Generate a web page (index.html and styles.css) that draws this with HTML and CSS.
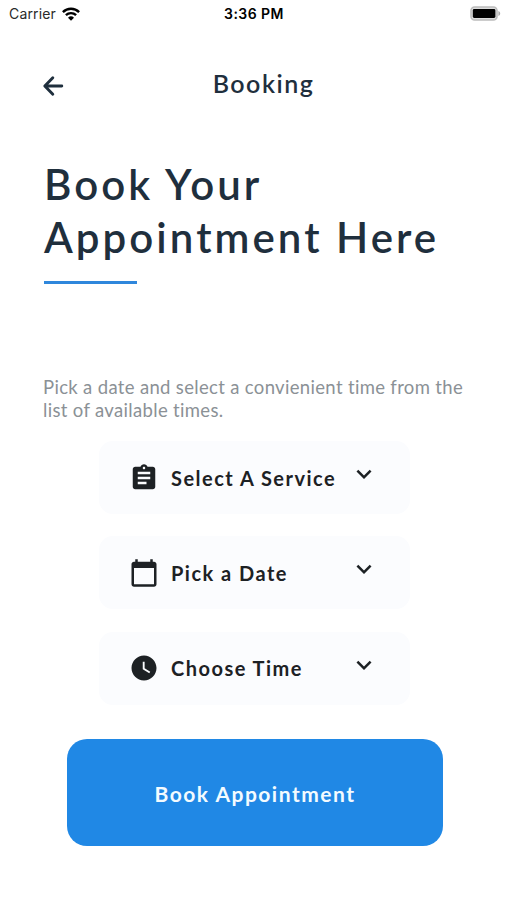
FILE: index.html
```html
<!DOCTYPE html>
<html lang="en">
<head>
<meta charset="utf-8">
<title>Booking</title>
<link rel="stylesheet" href="styles.css">
</head>
<body>
<div class="status">
  <div class="carrier">Carrier
    <svg class="wifi" width="18" height="14" viewBox="0 0 18 14"><g fill="none" stroke="#000" stroke-width="2.4"><path d="M.9 5.1a11.6 11.6 0 0 1 16.2 0"/><path d="M3.9 8.2a7.3 7.3 0 0 1 10.2 0"/></g><path d="M9 13.8 6 10.8a4.3 4.3 0 0 1 6 0z"/></svg>
  </div>
  <div class="clock">3:36 PM</div>
  <svg class="battery" width="31" height="15" viewBox="0 0 31 15"><rect x="1" y="1" width="26" height="13" rx="3.6" fill="#ddd" stroke="#bcbcbc" stroke-width="1.6"/><rect x="2.8" y="3" width="22.6" height="9" rx="1.4"/><path d="M28.4 5c2.400 1 2.400 4 0 5z" fill="#aaa"/></svg>
</div>
<header class="header">
  <svg class="back" width="22" height="22" viewBox="0 0 22 22"><path d="M19.800 11H3.500M10.800 2.700 2.800 11l8 8.300"/></svg>
  <h2 class="title">Booking</h2>
</header>
<main>
  <h1 class="heading">Book Your<br>Appointment Here</h1>
  <div class="rule"></div>
  <p class="intro">Pick a date and select a convienient time from the<br>list of available times.</p>
  <div class="options">
    <div class="option">
      <svg class="icon" viewBox="0 0 24 24"><path d="M19 3h-4.180C14.400 1.840 13.300 1 12 1c-1.300 0-2.400.840-2.820 2H5c-1.100 0-2 .900-2 2v14c0 1.100.900 2 2 2h14c1.100 0 2-.900 2-2V5c0-1.100-.900-2-2-2zm-7 0c.550 0 1 .450 1 1s-.450 1-1 1-1-.450-1-1 .450-1 1-1zm2 14H7v-2h7v2zm3-4H7v-2h10v2zm0-4H7V7h10v2z"/></svg>
      <span class="label">Select A Service</span>
      <svg class="chevron" viewBox="0 0 24 24"><path d="M7.410 8.590 12 13.170l4.590-4.580L18 10l-6 6-6-6z"/></svg>
    </div>
    <div class="option">
      <svg class="icon" viewBox="0 0 24 24"><path d="M20 3h-1V1h-2v2H7V1H5v2H4c-1.100 0-2 .900-2 2v16c0 1.100.900 2 2 2h16c1.100 0 2-.900 2-2V5c0-1.100-.900-2-2-2zm0 18H4V8h16v13z"/></svg>
      <span class="label">Pick a Date</span>
      <svg class="chevron" viewBox="0 0 24 24"><path d="M7.410 8.590 12 13.170l4.590-4.580L18 10l-6 6-6-6z"/></svg>
    </div>
    <div class="option">
      <svg class="icon" viewBox="0 0 24 24"><path d="M12 2C6.500 2 2 6.500 2 12s4.500 10 10 10 10-4.500 10-10S17.500 2 12 2zm4.200 14.200L11 13V7h1.500v5.200l4.500 2.700-.800 1.300z"/></svg>
      <span class="label">Choose Time</span>
      <svg class="chevron" viewBox="0 0 24 24"><path d="M7.410 8.590 12 13.170l4.590-4.580L18 10l-6 6-6-6z"/></svg>
    </div>
  </div>
  <button class="submit">Book Appointment</button>
</main>
</body>
</html>
```
FILE: styles.css
```css
* { box-sizing: border-box; }
body {
  margin: 0;
  height: 900px;
  background: #fff;
  color: #1f2f3d;
  font-family: Lato, "Liberation Sans", sans-serif;
  overflow: hidden;
}
.status {
  display: grid;
  grid-template-columns: 1fr auto 1fr;
  align-items: center;
  height: 27px;
  padding: 0 8px 0 9px;
  font: 400 14px/27px Inter, sans-serif;
  color: #2a2a2a;
}
.carrier { display: flex; align-items: center; gap: 6px; letter-spacing: 0.150px; }
.clock { font-weight: 600; color: #000; letter-spacing: 0.450px; }
.battery { justify-self: end; margin-right: -2px; }
.header {
  display: grid;
  grid-template-columns: 42px 1fr 22px;
  align-items: center;
  height: 60px;
  margin-top: 26px;
  padding: 0 42px;
}
.back {
  margin-top: 5px;
  fill: none;
  stroke: #1f2f3d;
  stroke-width: 2.900;
  stroke-linecap: round;
  stroke-linejoin: round;
}
.title { margin: 0; text-align: center; font-size: 25px; font-weight: 600; letter-spacing: 1.500px; }
.heading { margin: 45px 0 0 44px; font-size: 42px; font-weight: 600; line-height: 53px; letter-spacing: 3.050px; white-space: nowrap; }
.rule { width: 93px; height: 3px; margin: 17px 0 0 44px; background: #2f87dc; }
.intro { margin: 92px 0 0 43px; font-size: 18.500px; line-height: 23px; letter-spacing: 0.330px; color: #8b9196; white-space: nowrap; }
.options { display: grid; gap: 22.300px; width: 311px; margin: 19px 0 0 99px; }
.option {
  display: flex;
  align-items: center;
  height: 73px;
  padding: 0 31px 0 30px;
  border-radius: 14px;
  background: #fbfcfe;
  color: #1d2124;
}
.icon { width: 30px; height: 30px; fill: #1d2124; }
.label { flex: 1; margin-left: 12px; font-size: 20px; font-weight: 700; letter-spacing: 1.480px; white-space: nowrap; }
.chevron { width: 30px; height: 30px; margin-top: -7px; fill: #1d2124; }
.submit {
  display: block;
  width: 376px;
  height: 107px;
  margin: 34px 0 0 67px;
  padding: 3px 0 0;
  border: 0;
  border-radius: 20px;
  background: #2088e5;
  color: #f3fbff;
  font: 700 21px Lato, sans-serif;
  letter-spacing: 1.500px;
}
```
